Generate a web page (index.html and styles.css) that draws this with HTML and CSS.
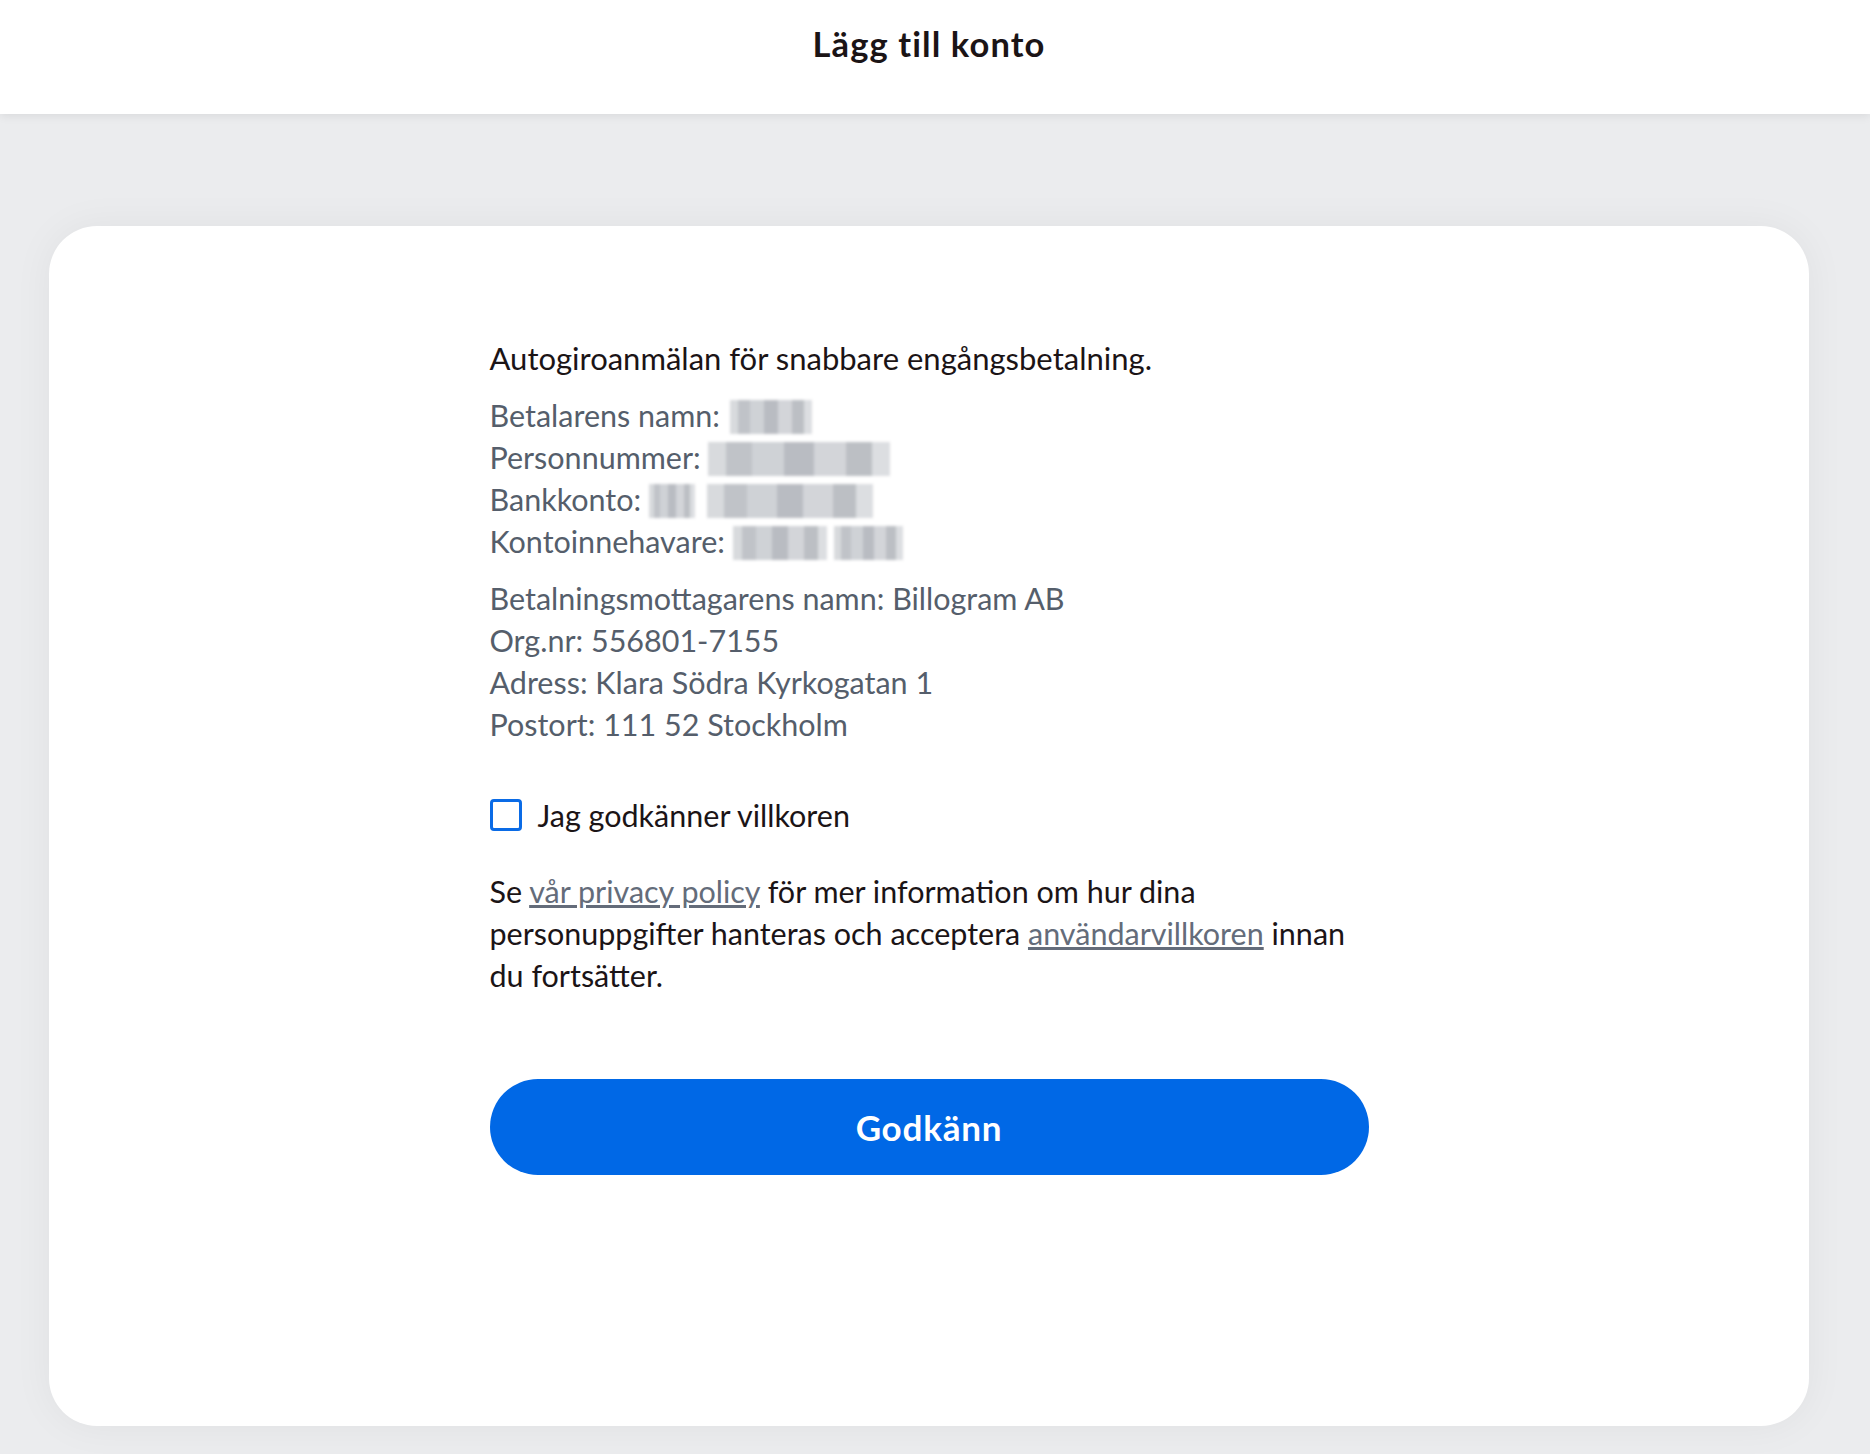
FILE: index.html
```html
<!DOCTYPE html>
<html lang="sv">
<head>
    <meta charset="UTF-8">
    <meta name="viewport" content="width=device-width, initial-scale=1.0">
    <title>Lägg till konto</title>
    <link rel="stylesheet" href="styles.css">
</head>
<body>
    <header class="topbar">
        <h1>Lägg till konto</h1>
    </header>

    <main class="page">
        <section class="card">
            <div class="mandate">
                <p class="intro">Autogiroanmälan för snabbare engångsbetalning.</p>

                <div class="details">
                    <div>Betalarens namn: <span class="masked masked-name"></span></div>
                    <div>Personnummer: <span class="masked masked-pnr"></span></div>
                    <div>Bankkonto: <span class="masked masked-clearing"></span><span class="masked masked-account"></span></div>
                    <div>Kontoinnehavare: <span class="masked masked-first"></span><span class="masked masked-last"></span></div>
                </div>

                <div class="details">
                    <div>Betalningsmottagarens namn: Billogram AB</div>
                    <div>Org.nr: 556801-7155</div>
                    <div>Adress: Klara Södra Kyrkogatan 1</div>
                    <div>Postort: 111 52 Stockholm</div>
                </div>

                <label class="consent">
                    <input type="checkbox" id="terms">
                    <span class="box"></span>
                    Jag godkänner villkoren
                </label>

                <p class="legal">Se <a href="#">vår privacy policy</a> för mer information om hur dina personuppgifter hanteras och acceptera <a href="#">användarvillkoren</a> innan du fortsätter.</p>

                <button type="button" class="approve">Godkänn</button>
            </div>
        </section>
    </main>
</body>
</html>
```

FILE: styles.css
```css
body {
    margin: 0;
    background-color: #ebecee;
    font-family: Lato, "Noto Sans", sans-serif;
    color: #1b1416;
}

.topbar {
    height: 114px;
    padding-right: 12px;
    background-color: #fff;
    box-shadow: 0 2px 9px rgba(0, 0, 0, 0.08);
    display: flex;
    align-items: center;
    justify-content: center;
    position: relative;
}
.topbar h1 {
    margin: 0 0 28px;
    font-size: 34.5px;
    font-weight: 700;
    letter-spacing: 1.1px;
}

.page {
    padding: 112px 61px 28px 49px;
}
.card {
    box-sizing: border-box;
    min-height: 1200px;
    padding-top: 111px;
    background-color: #fff;
    border-radius: 48px;
    box-shadow: 0 0 40px rgba(0, 0, 0, 0.05);
}
.mandate {
    width: 879px;
    margin: 0 auto;
    font-size: 30.5px;
    line-height: 42px;
}

.intro {
    margin: 0 0 15px;
    font-size: 31px;
}
.details {
    margin-bottom: 15px;
    color: #555e6b;
}

/* pixelated values, hidden in the screenshot */
.masked {
    display: inline-block;
    height: 34px;
    vertical-align: -7px;
    filter: blur(1.5px);
    background: linear-gradient(to right, #d8dadd 0 10%, #c0c3c8 10% 24%, #cfd2d6 24% 42%, #b9bcc2 42% 58%, #d3d5d9 58% 76%, #bcbfc4 76% 90%, #dcdee1 90%);
}
.masked-name { width: 82px; margin-left: 2px; }
.masked-pnr { width: 182px; }
.masked-clearing { width: 46px; }
.masked-account { width: 166px; margin-left: 12px; }
.masked-first { width: 94px; }
.masked-last { width: 69px; margin-left: 7px; }

.consent {
    display: flex;
    align-items: center;
    gap: 16px;
    margin-top: 49px;
    height: 42px;
    cursor: pointer;
}
.consent input {
    display: none;
}
.consent .box {
    box-sizing: border-box;
    width: 32px;
    height: 32px;
    border: 3px solid #0a6be6;
    border-radius: 4px;
}

.legal {
    margin: 34px 0 0;
}
.legal a {
    color: #646c7a;
}

.approve {
    display: block;
    width: 100%;
    height: 96px;
    margin-top: 83px;
    border: none;
    border-radius: 48px;
    background-color: #0068e6;
    color: #fff;
    font-family: inherit;
    font-size: 35px;
    font-weight: 700;
    letter-spacing: 0.8px;
    cursor: pointer;
}
```
